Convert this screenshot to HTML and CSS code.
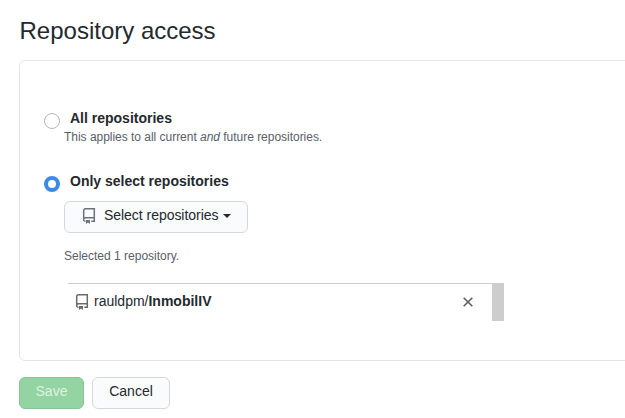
FILE: index.html
```html
<!DOCTYPE html>
<html lang="en">
<head>
<meta charset="utf-8">
<title>Repository access</title>
<link rel="stylesheet" href="styles.css">
</head>
<body>
<main class="page">
  <h2 class="title">Repository access</h2>
  <section class="box">
    <div class="option">
      <span class="radio"></span>
      <div class="body">
        <strong class="label">All repositories</strong>
        <p class="note">This applies to all current <em>and</em> future repositories.</p>
      </div>
    </div>
    <div class="option option-selected">
      <span class="radio radio-on"></span>
      <div class="body">
        <strong class="label">Only select repositories</strong>
        <button class="btn select" type="button">
          <svg class="repo" viewBox="0 0 16 16" width="16" height="16"><path class="book" d="M4.500 13.300h-.2a1.600 1.600 0 01-1.600-1.600V2.500A1.800 1.800 0 014.500.7h8.800v12.600h-3M2.700 10.500q.5-.8 1.800-.8h8.800"/><path d="M5 12v3.600a.25.25 0 00.4.2L7 14.600l1.600 1.200a.25.25 0 00.4-.2V12z"/></svg>
          <span class="text">Select repositories</span>
          <span class="caret"></span>
        </button>
        <p class="count">Selected 1 repository.</p>
        <div class="list">
          <div class="item">
            <svg class="repo" viewBox="0 0 16 16" width="16" height="16"><path class="book" d="M4.500 13.300h-.2a1.600 1.600 0 01-1.600-1.600V2.500A1.800 1.800 0 014.500.7h8.800v12.600h-3M2.700 10.500q.5-.8 1.800-.8h8.800"/><path d="M5 12v3.600a.25.25 0 00.4.2L7 14.600l1.600 1.200a.25.25 0 00.4-.2V12z"/></svg>
            <span class="name">rauldpm/<b>InmobilIV</b></span>
            <svg class="remove" viewBox="0 0 16 16" width="16" height="16"><path d="M3.700 3.700l8.600 8.600M12.300 3.700l-8.600 8.600"/></svg>
          </div>
          <div class="scrollbar"></div>
        </div>
      </div>
    </div>
  </section>
  <div class="actions">
    <button class="btn save" type="button" disabled>Save</button>
    <button class="btn cancel" type="button">Cancel</button>
  </div>
</main>
</body>
</html>
```

FILE: styles.css
```css
* {
  box-sizing: border-box;
}

body {
  margin: 0;
  background: #fff;
  color: #24292e;
  font: 14px/21px "Liberation Sans", Arial, sans-serif;
  overflow: hidden;
}

p {
  margin: 0;
}

.page {
  padding: 13px 0 0 19px;
}

.title {
  margin: 0 0 11px;
  padding-left: 0.5px;
  font-size: 24px;
  font-weight: 400;
  line-height: 36px;
}

.box {
  height: 301px;
  margin-right: -10px;
  padding: 47px 0 0 24px;
  border: 1px solid #e1e4e8;
  border-radius: 6px;
}

.option {
  display: flex;
  gap: 4px;
}

.option-selected {
  margin-top: 25px;
}

.radio {
  flex: none;
  width: 16px;
  height: 16px;
  margin-top: 5px;
  border: 1px solid #b8b5b2;
  border-radius: 50%;
  background: #fff;
}

.radio-on {
  border: 4px solid #3d89e6;
}

.label {
  display: block;
  padding-left: 6px;
  line-height: 21px;
}

.note,
.count {
  color: #586069;
  font-size: 12px;
  line-height: 18px;
}

.note {
  height: 17px;
  line-height: 16px;
  letter-spacing: -0.025px;
}

.btn {
  height: 32px;
  padding: 0 15px 4px;
  border: 1px solid #d5d8da;
  border-radius: 6px;
  background: #fafbfc;
  color: #24292e;
  font: 14px/20px "Liberation Sans", Arial, sans-serif;
  white-space: nowrap;
}

.select {
  display: flex;
  align-items: center;
  width: 184px;
  margin-top: 9px;
  padding-left: 16px;
}

.select .text {
  letter-spacing: -0.04px;
}

.repo {
  flex: none;
}

.book {
  fill: none;
  stroke-width: 1.5;
}

.select .repo {
  margin: 2px 7px 0 0;
  fill: #6a737d;
  stroke: none;
}

.select .book {
  fill: none;
  stroke: #6a737d;
}

.caret {
  flex: none;
  margin: 2px 0 0 5px;
  border: 4px solid transparent;
  border-top-color: #24292e;
  border-bottom: 0;
}

.count {
  margin-top: 14px;
}

.list {
  display: flex;
  width: 436px;
  height: 38px;
  margin: 18px 0 0 4px;
}

.item {
  display: flex;
  flex: 1;
  align-items: center;
  padding: 0 16px 0 6px;
  border-top: 1px solid #cdcdcd;
}

.item .repo {
  margin-bottom: 1px;
  fill: #6a6a6a;
}

.item .book {
  fill: none;
  stroke: #6a6a6a;
}

.name {
  flex: 1;
  margin: 0 0 2px 4px;
}

.remove {
  margin-bottom: 1px;
  fill: none;
  stroke: #586069;
  stroke-width: 1.6;
}

.scrollbar {
  width: 12px;
  background: #cdcdcd;
}

.actions {
  display: flex;
  gap: 8px;
  margin-top: 16px;
}

.save {
  width: 65px;
  border-color: #86c593;
  background: #94d3a2;
  color: #dff2e3;
}

.cancel {
  width: 78px;
}
```
